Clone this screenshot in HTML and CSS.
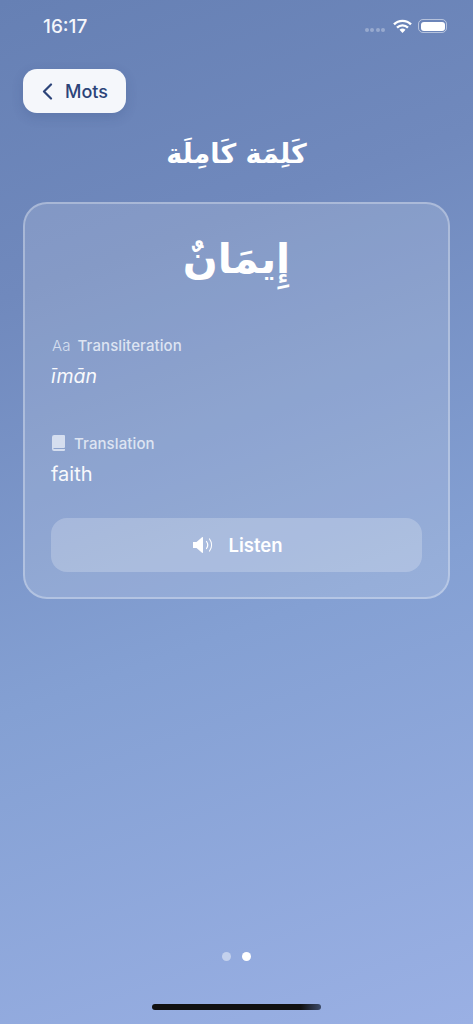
FILE: index.html
```html
<!DOCTYPE html>
<html lang="fr">
<head>
<meta charset="utf-8">
<title>Mots</title>
<link rel="stylesheet" href="styles.css">
</head>
<body>
<main class="screen">
  <div class="status">
    <span class="time">16:17</span>
    <div class="status-icons">
      <span class="signal"><i></i><i></i><i></i><i></i></span>
      <svg class="wifi" width="19" height="14" viewBox="0 0 19 14"><path d="M1 5.4a12 12 0 0 1 17 0" fill="none" stroke="#fff" stroke-width="2.4"/><path d="M4 8.6a8 8 0 0 1 11 0" fill="none" stroke="#fff" stroke-width="2.4"/><path d="M9.5 14l-3-3.2a4.4 4.4 0 0 1 6 0z" fill="#fff"/></svg>
      <span class="battery"><span class="battery-fill"></span></span>
    </div>
  </div>
  <div class="nav">
    <button class="back">
      <svg width="11" height="17" viewBox="0 0 11 17"><path d="M9 1.5L2 8.5l7 7" fill="none" stroke="#2c4479" stroke-width="2.2" stroke-linecap="round" stroke-linejoin="round"/></svg>
      <span>Mots</span>
    </button>
  </div>
  <h1 class="title" lang="ar" dir="rtl">كَلِمَة كَامِلَة</h1>
  <section class="card">
    <div class="word" lang="ar" dir="rtl">إِيمَانٌ</div>
    <div class="field field-first">
      <div class="label"><span class="aa">Aa</span><span>Transliteration</span></div>
      <div class="value value-italic">īmān</div>
    </div>
    <div class="field field-second">
      <div class="label label-tight">
        <svg width="13" height="16" viewBox="0 0 13 16"><path d="M2.2 0H12a1 1 0 0 1 1 1v11a1 1 0 0 1-1 1H2.4A1.4 1.4 0 0 0 1.2 14H13v1a1 1 0 0 1-1 1H2a2 2 0 0 1-2-2V2.2A2.2 2.2 0 0 1 2.2 0z" fill="#d5deef"/></svg>
        <span>Translation</span>
      </div>
      <div class="value">faith</div>
    </div>
    <button class="listen">
      <svg width="22" height="18" viewBox="0 0 22 18"><path d="M0 6h3.5L9 1.2c.5-.4 1-.2 1 .5v14.6c0 .7-.5.9-1 .5L3.5 12H0z" fill="#fff"/><path d="M13.5 5.5a6 6 0 0 1 0 7M16.5 3a10 10 0 0 1 0 12" fill="none" stroke="#fff" stroke-width="1.2" stroke-linecap="round"/></svg>
      <span>Listen</span>
    </button>
  </section>
  <div class="spacer"></div>
  <div class="dots"><i class="dot"></i><i class="dot dot-on"></i></div>
  <div class="home-row"><span class="home"></span></div>
</main>
</body>
</html>
```
FILE: styles.css
```css
* { box-sizing: border-box; }
html, body { margin: 0; padding: 0; height: 100%; }
body { font-family: Inter, "Liberation Sans", sans-serif; color: #fff; }
.screen {
  width: 473px; height: 1024px; overflow: hidden;
  display: flex; flex-direction: column;
  background: linear-gradient(160deg, #6680b4 0%, #7089bd 25%, #84a0d3 60%, #9ab0e4 100%);
}
.status { height: 46px; padding: 17px 26px 0 43px; display: flex; justify-content: space-between; align-items: flex-start; }
.time { font-size: 19px; font-weight: 500; line-height: 20px; color: #f4f6fb; }
.status-icons { display: flex; align-items: center; gap: 7px; height: 18px; }
.signal { display: flex; gap: 1.5px; margin-top: 7px; }
.signal i { width: 4px; height: 4px; border-radius: 50%; background: rgba(255,255,255,.3); }
.wifi { margin: 0 -1px 0 1px; }
.battery {
  width: 29px; height: 14px; border: 1px solid rgba(255,255,255,.5); border-radius: 5px; padding: 1.5px; display: flex;
}
.battery-fill { flex: 1; background: #fff; border-radius: 3px; }
.nav { padding: 23px 0 0 23px; }
.back {
  width: 103px; height: 44px; border: 0; border-radius: 14px; background: #f5f7fb;
  box-shadow: 0 4px 12px rgba(40,60,110,.18);
  display: flex; align-items: center; gap: 12px; padding: 0 0 0 19px;
  font: 500 18px Inter, sans-serif; color: #2c4479;
}
.title {
  margin: 18px 0 0; height: 50px; text-align: center;
  font: 700 27px/46px "DejaVu Sans", sans-serif; color: #fff;
}
.card {
  margin: 21px 23px 0; height: 397px; padding: 0 26px;
  border: 2px solid rgba(255,255,255,.3); border-radius: 24px;
  background: rgba(255,255,255,.15);
  display: flex; flex-direction: column;
}
.word { height: 99px; text-align: center; font: 700 41px/110px "DejaVu Sans", sans-serif; }
.field-first { margin-top: 33px; }
.field-second { margin-top: 44px; }
.label { display: flex; align-items: center; gap: 7px; height: 18px; font-size: 15px; font-weight: 500; color: #dde4f2; letter-spacing: .1px; }
.label-tight { gap: 9px; padding-left: 1px; }
.aa { font-weight: 300; color: #d5deef; padding-left: 1px; }
.value { margin-top: 8px; font-size: 20px; line-height: 28px; color: #f8f9fc; }
.value-italic { font-style: italic; font-size: 19.5px; }
.listen {
  margin-top: 30px; height: 54px; width: 100%; border: 0; border-radius: 16px;
  background: rgba(255,255,255,.22); color: #fff;
  display: flex; align-items: center; justify-content: center; gap: 13px;
  padding: 0 0 0 3px;
  font: 600 18.5px Inter, sans-serif;
}
.spacer { flex: 1; }
.dots { display: flex; justify-content: center; gap: 11px; margin-bottom: 40px; }
.dot { width: 9px; height: 9px; border-radius: 50%; background: rgba(255,255,255,.45); }
.dot-on { background: #fff; }
.home-row { height: 23px; display: flex; justify-content: center; }
.home { width: 169px; height: 6px; margin-top: 3px; border-radius: 3px; background: linear-gradient(90deg, #111 0, #111 88%, #3c4a68 100%); }
```
